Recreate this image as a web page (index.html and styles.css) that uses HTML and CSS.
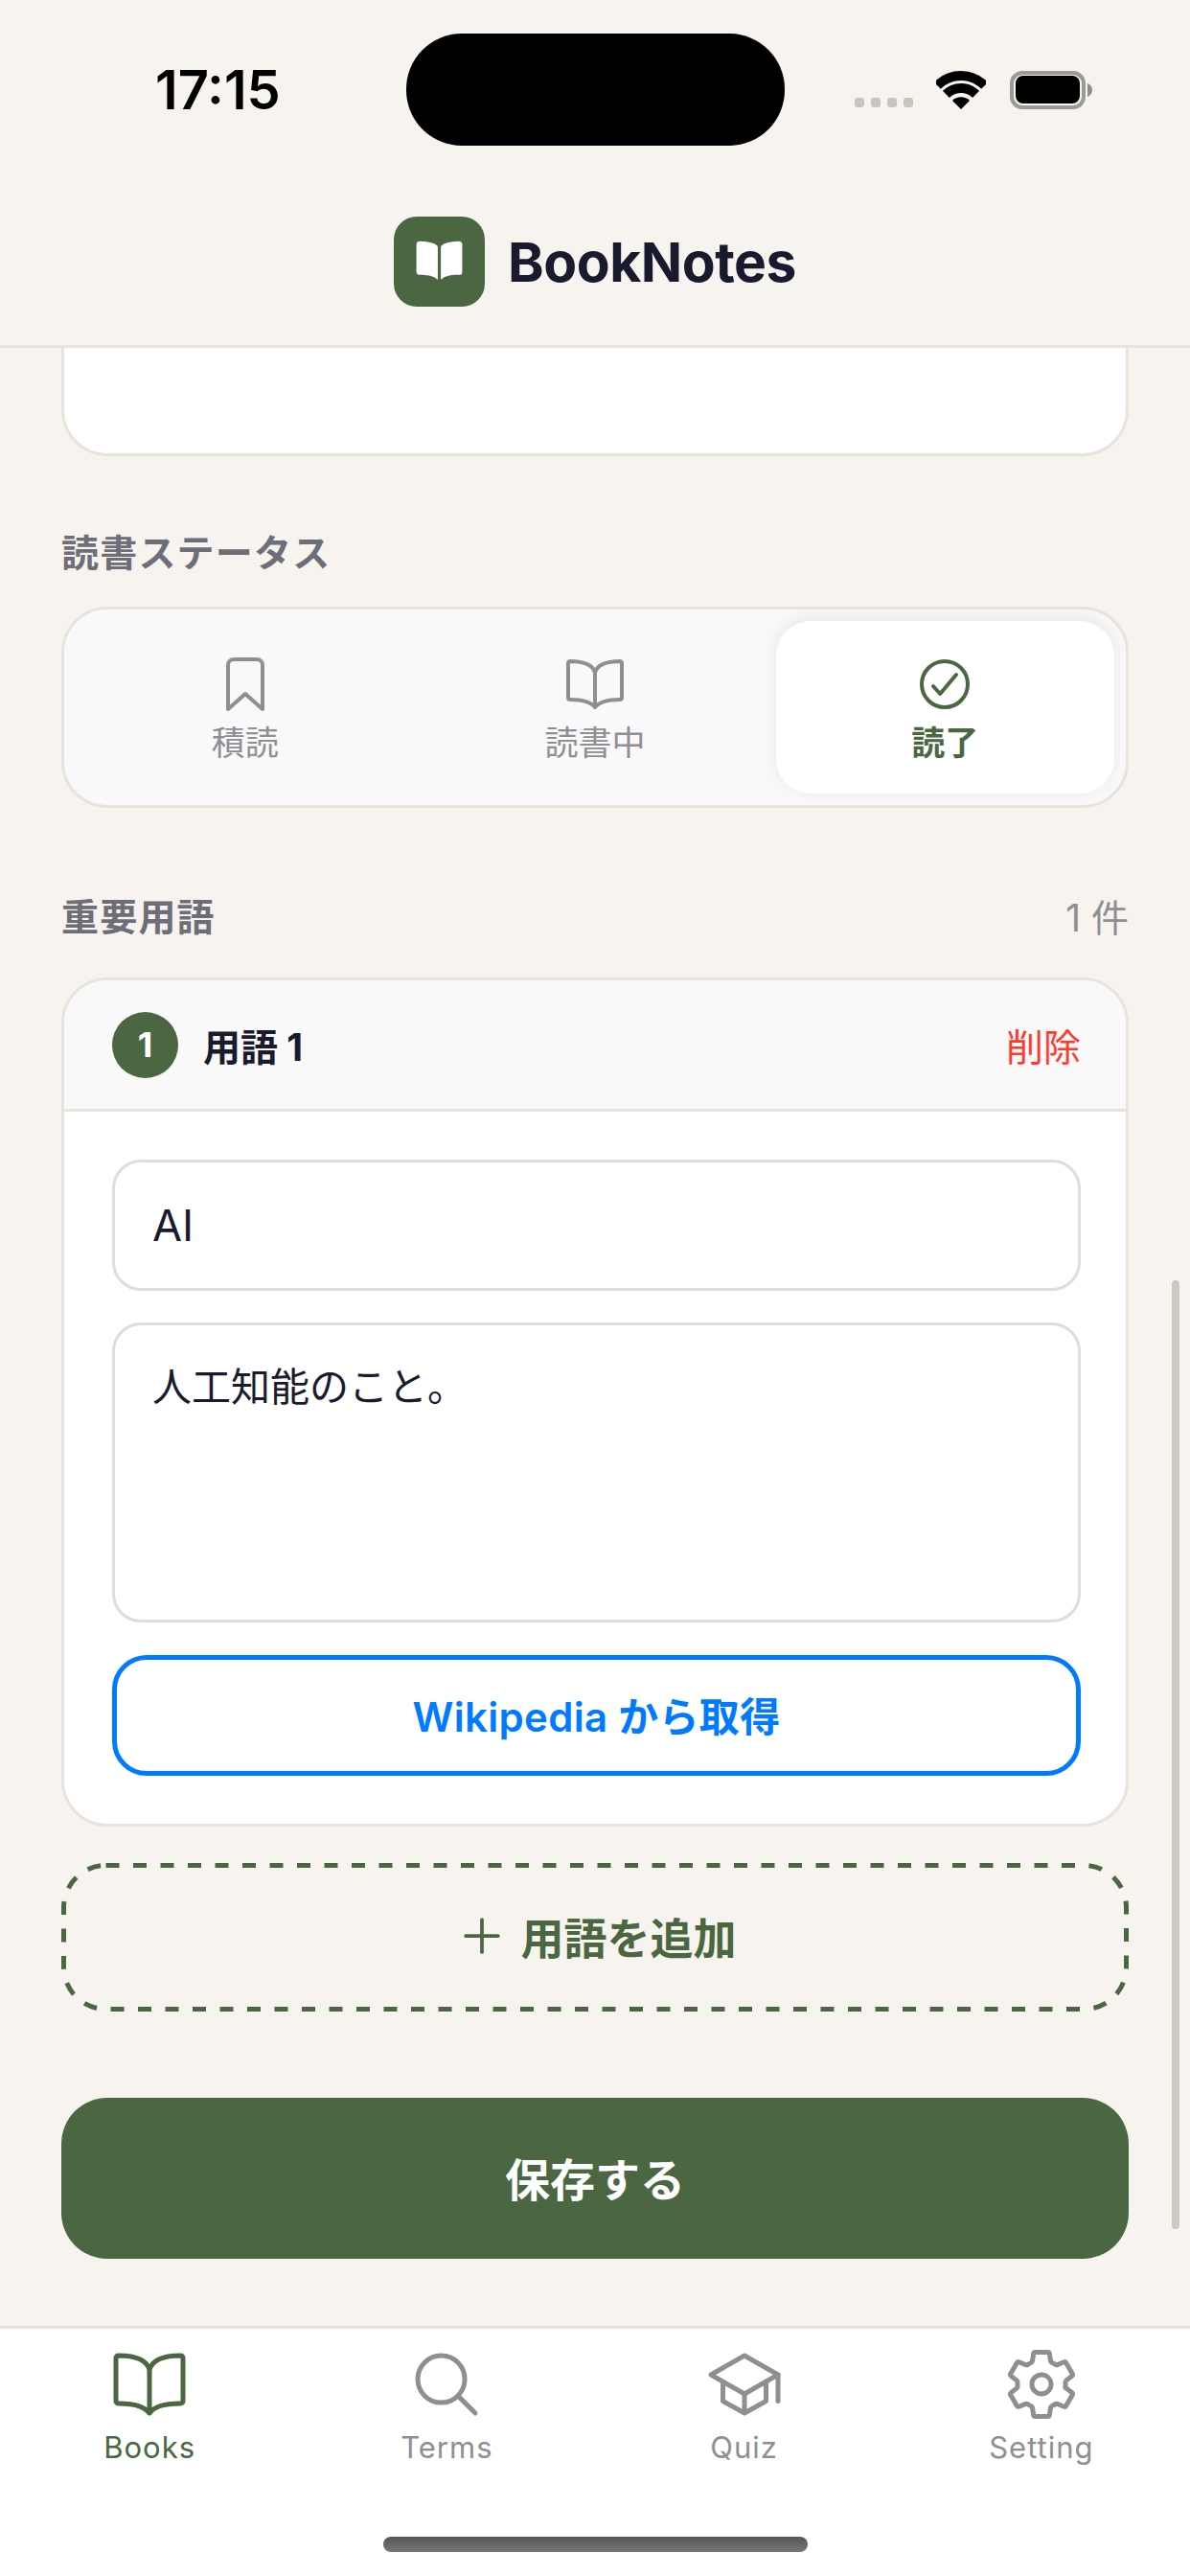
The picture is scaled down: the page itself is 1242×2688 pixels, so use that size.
FILE: index.html
```html
<!DOCTYPE html>
<html lang="ja">
<head>
    <meta charset="UTF-8">
    <meta name="viewport" content="width=device-width, initial-scale=1.0">
    <title>BookNotes</title>
    <link rel="stylesheet" href="styles.css">
</head>
<body>

    <!-- Status bar -->
    <div class="status-bar">
        <div class="status-time">17:15</div>
        <div class="island"></div>
        <div class="status-icons">
            <div class="signal-dots"><span></span><span></span><span></span><span></span></div>
            <svg class="wifi" viewBox="0 0 52 40">
                <path class="wifi-arc" d="M1.3 15.3A35 35 0 0 1 50.7 15.3"/>
                <path class="wifi-arc" d="M10.4 24.4A22 22 0 0 1 41.6 24.4"/>
                <path d="M26 40L17 31A12.7 12.7 0 0 1 35 31Z"/>
            </svg>
            <svg class="battery" viewBox="0 0 86 40">
                <rect class="battery-shell" x="2" y="2" width="75" height="36" rx="11"/>
                <rect x="6" y="5" width="67" height="29" rx="8"/>
                <path class="battery-cap" d="M81 13c3 1 5 4 5 7s-2 6-5 7z"/>
            </svg>
        </div>
    </div>

    <!-- App header -->
    <header class="app-header">
        <div class="logo">
            <svg viewBox="0 0 512 512"><path d="M202.24 74C166.11 56.75 115.61 48.3 48 48a31.36 31.36 0 00-17.92 5.33A32 32 0 0016 79.9V366c0 19.34 13.76 33.93 32 33.93 71.07 0 142.36 6.64 185.06 47a4.11 4.11 0 006.94-3V106.82a15.89 15.89 0 00-5.46-12A143 143 0 00202.24 74zM481.92 53.3A31.33 31.33 0 00464 48c-67.61.3-118.11 8.71-154.24 26a143.31 143.31 0 00-32.31 20.78 15.93 15.93 0 00-5.45 12v337.13a3.93 3.93 0 006.68 2.81c25.67-25.5 70.72-46.82 185.36-46.81a32 32 0 0032-32v-288a32 32 0 00-14.12-26.61z"/></svg>
        </div>
        <div class="app-name">BookNotes</div>
    </header>

    <main class="content">
        <div class="scroll-thumb"></div>

        <div class="card-tail"></div>

        <section class="status-section">
            <div class="section-label status-label">読書ステータス</div>
            <div class="segments">
                <div class="segment">
                    <svg class="line-icon seg-icon" viewBox="0 0 512 512"><path d="M352 48H160a48 48 0 00-48 48v368l144-128 144 128V96a48 48 0 00-48-48z"/></svg>
                    <span>積読</span>
                </div>
                <div class="segment">
                    <svg class="line-icon seg-icon" viewBox="0 0 512 512"><path d="M256 160c16-63.16 76.43-95.41 208-96a15.94 15.94 0 0116 16v288a16 16 0 01-16 16c-128 0-177.45 25.81-208 64-30.37-38-80-64-208-64-9.88 0-16-8.05-16-17.93V80a15.94 15.94 0 0116-16c131.57.59 192 32.84 208 96zM256 160v288"/></svg>
                    <span>読書中</span>
                </div>
                <div class="segment active">
                    <svg class="line-icon seg-icon" viewBox="0 0 512 512"><path d="M448 256c0-106-86-192-192-192S64 150 64 256s86 192 192 192 192-86 192-192z"/><path d="M352 176L217.6 336 160 272"/></svg>
                    <span>読了</span>
                </div>
            </div>
        </section>

        <section class="terms-section">
            <div class="terms-row">
                <div class="section-label">重要用語</div>
                <div class="terms-count">1 件</div>
            </div>

            <div class="term-card">
                <div class="term-head">
                    <div class="term-badge">1</div>
                    <div class="term-title">用語 1</div>
                    <div class="term-delete">削除</div>
                </div>
                <div class="term-body">
                    <div class="field field-name">AI</div>
                    <div class="field field-desc">人工知能のこと。</div>
                    <div class="wiki-btn">Wikipedia から取得</div>
                </div>
            </div>

            <div class="add-term">
                <svg class="add-border" viewBox="0 0 1114 155"><rect x="2.5" y="2.5" width="1109" height="150" rx="44"/></svg>
                <svg class="line-icon add-plus" viewBox="0 0 512 512"><path d="M256 112v288M400 256H112"/></svg>
                <span>用語を追加</span>
            </div>
        </section>

        <div class="save-btn">保存する</div>
    </main>

    <!-- Bottom tabs -->
    <nav class="tab-bar">
        <div class="tabs">
            <div class="tab active">
                <svg class="line-icon tab-icon" viewBox="0 0 512 512"><path d="M256 160c16-63.16 76.43-95.41 208-96a15.94 15.94 0 0116 16v288a16 16 0 01-16 16c-128 0-177.45 25.81-208 64-30.37-38-80-64-208-64-9.88 0-16-8.05-16-17.93V80a15.94 15.94 0 0116-16c131.57.59 192 32.84 208 96zM256 160v288"/></svg>
                <span>Books</span>
            </div>
            <div class="tab">
                <svg class="line-icon tab-icon" viewBox="0 0 512 512"><path d="M221.09 64a157.09 157.09 0 10157.09 157.09A157.1 157.1 0 00221.09 64z"/><path d="M338.29 338.29L448 448"/></svg>
                <span>Terms</span>
            </div>
            <div class="tab">
                <svg class="line-icon tab-icon" viewBox="0 0 512 512"><path d="M32 192L256 64l224 128-224 128L32 192z"/><path d="M112 240v128l144 80 144-80V240M480 368V192M256 320v128"/></svg>
                <span>Quiz</span>
            </div>
            <div class="tab">
                <svg class="line-icon tab-icon" viewBox="0 0 512 512"><path d="M262.29 192.31a64 64 0 1057.4 57.4 64.13 64.13 0 00-57.4-57.4zM416.39 256a154.34 154.34 0 01-1.53 20.79l45.21 35.46a10.81 10.81 0 012.45 13.75l-42.77 74a10.81 10.81 0 01-13.14 4.59l-44.9-18.08a16.11 16.11 0 00-15.17 1.75A164.48 164.48 0 01325 400.8a15.94 15.94 0 00-8.82 12.14l-6.73 47.89a11.08 11.08 0 01-10.68 9.17h-85.54a11.11 11.11 0 01-10.69-8.87l-6.72-47.82a16.07 16.07 0 00-9-12.22 155.3 155.3 0 01-21.46-12.57 16 16 0 00-15.11-1.71l-44.89 18.07a10.81 10.81 0 01-13.14-4.58l-42.77-74a10.8 10.8 0 012.45-13.75l38.21-30a16.05 16.05 0 006-14.08c-.36-4.17-.58-8.33-.58-12.5s.21-8.27.58-12.35a16 16 0 00-6.07-13.94l-38.19-30A10.81 10.81 0 0149.48 186l42.77-74a10.81 10.81 0 0113.14-4.59l44.9 18.08a16.11 16.11 0 0015.17-1.75A164.48 164.48 0 01187 111.2a15.94 15.94 0 008.82-12.14l6.73-47.89A11.08 11.08 0 01213.23 42h85.54a11.11 11.11 0 0110.69 8.87l6.72 47.82a16.07 16.07 0 009 12.22 155.3 155.3 0 0121.46 12.57 16 16 0 0015.11 1.71l44.89-18.07a10.81 10.81 0 0113.14 4.58l42.77 74a10.8 10.8 0 01-2.45 13.75l-38.21 30a16.05 16.05 0 00-6.05 14.08c.33 4.14.55 8.3.55 12.47z"/></svg>
                <span>Setting</span>
            </div>
        </div>
        <div class="home-indicator"></div>
    </nav>

</body>
</html>
```

FILE: styles.css
```css
* {
    box-sizing: border-box;
}
body {
    margin: 0;
    width: 1242px;
    height: 2688px;
    display: flex;
    flex-direction: column;
    overflow: hidden;
    font-family: Inter, "Noto Sans CJK JP", sans-serif;
    background-color: #f7f4ef;
    color: #1a1a2e;
}

/* status bar */
.status-bar {
    display: grid;
    grid-template-columns: 1fr 395px 1fr;
    align-items: center;
    height: 117px;
    margin-top: 35px;
}
.status-time {
    padding-left: 162px;
    font-size: 56px;
    font-weight: 600;
    color: #000;
}
.island {
    height: 117px;
    border-radius: 58px;
    background-color: #000;
}
.status-icons {
    display: flex;
    align-items: center;
    padding-left: 73px;
}
.signal-dots {
    display: flex;
    gap: 7px;
    margin-top: 26px;
}
.signal-dots span {
    width: 10px;
    height: 10px;
    border-radius: 3px;
    background-color: #c8c5bf;
}
.wifi {
    width: 52px;
    height: 40px;
    margin-left: 24px;
}
.wifi-arc {
    fill: none;
    stroke: #000;
    stroke-width: 10;
}
.battery {
    width: 86px;
    height: 40px;
    margin-left: 25px;
}
.battery-shell {
    fill: none;
    stroke: #9c9a96;
    stroke-width: 4;
}
.battery-cap {
    fill: #8f8e8a;
}

/* app header */
.app-header {
    display: flex;
    align-items: center;
    justify-content: center;
    gap: 24px;
    padding: 74px 0 40px;
    border-bottom: 3px solid #e8e3dc;
}
.logo {
    display: flex;
    align-items: center;
    justify-content: center;
    width: 95px;
    height: 94px;
    border-radius: 24px;
    background-color: #4a6741;
}
.logo svg {
    width: 51px;
    height: 51px;
    margin-top: -2px;
    fill: #fff;
}
.app-name {
    font-size: 57px;
    font-weight: 700;
    letter-spacing: -0.5px;
}

/* shared line icons */
.line-icon {
    fill: none;
    stroke: currentColor;
    stroke-width: 32;
    stroke-linecap: round;
    stroke-linejoin: round;
}

/* scrolling area */
.content {
    position: relative;
    flex: 1;
    padding: 0 64px;
    overflow: hidden;
}
.scroll-thumb {
    position: absolute;
    top: 973px;
    right: 11px;
    width: 8px;
    height: 990px;
    border-radius: 4px;
    background-color: #cdc9c2;
}
.card-tail {
    height: 113px;
    border: 3px solid #e8e3dc;
    border-top: none;
    border-radius: 0 0 48px 48px;
    background-color: #fff;
}
.section-label {
    height: 54px;
    font-size: 39px;
    font-weight: 700;
    line-height: 52px;
    letter-spacing: 1.2px;
    color: #6e6e78;
}

/* reading status */
.status-section {
    margin-top: 75px;
}
.status-label {
    margin-bottom: 28px;
}
.segments {
    display: flex;
    gap: 12px;
    padding: 12px;
    height: 210px;
    overflow: hidden;
    border: 3px solid #e8e3dc;
    border-radius: 48px;
    background-color: #f9f9f9;
}
.segment {
    flex: 1;
    display: flex;
    flex-direction: column;
    align-items: center;
    justify-content: center;
    gap: 5px;
    padding-top: 5px;
    border-radius: 36px;
    font-size: 35px;
    line-height: 48px;
    color: #8e8e93;
}
.segment.active {
    background-color: #fff;
    color: #4a6741;
    font-weight: 700;
    box-shadow: 0 -3px 18px rgba(0, 0, 0, 0.08);
}
.seg-icon {
    width: 64px;
    height: 64px;
}

/* terms */
.terms-section {
    margin-top: 88px;
}
.terms-row {
    display: flex;
    justify-content: space-between;
    align-items: center;
    height: 54px;
    margin-bottom: 35px;
}
.terms-count {
    font-size: 39px;
    line-height: 54px;
    color: #8e8e93;
}
.term-card {
    border: 3px solid #e8e3dc;
    border-radius: 48px;
    overflow: hidden;
    background-color: #fff;
}
.term-head {
    display: flex;
    align-items: center;
    height: 137px;
    padding: 0 47px 0 50px;
    border-bottom: 3px solid #e8e3dc;
    background-color: #f9f9f9;
}
.term-badge {
    display: flex;
    align-items: center;
    justify-content: center;
    width: 69px;
    height: 69px;
    border-radius: 50%;
    background-color: #4a6741;
    color: #fff;
    font-size: 36px;
    font-weight: 700;
}
.term-title {
    flex: 1;
    margin-left: 26px;
    font-size: 39px;
    font-weight: 700;
}
.term-delete {
    font-size: 39px;
    color: #ff3b30;
}
.term-body {
    display: flex;
    flex-direction: column;
    gap: 33px;
    padding: 50px 47px 50px 50px;
}
.field {
    border: 3px solid #ddd;
    border-radius: 30px;
    padding: 0 39px;
}
.field-name {
    display: flex;
    align-items: center;
    height: 137px;
    font-size: 45px;
}
.field-desc {
    height: 313px;
    margin-bottom: 1px;
    padding-top: 34px;
    font-size: 41px;
    line-height: 60px;
}
.wiki-btn {
    display: flex;
    align-items: center;
    justify-content: center;
    height: 126px;
    padding-bottom: 3px;
    border: 5px solid #007aff;
    border-radius: 36px;
    color: #007aff;
    font-size: 42px;
    font-weight: 600;
    letter-spacing: 0.3px;
}
.add-term {
    position: relative;
    display: flex;
    align-items: center;
    justify-content: center;
    gap: 10px;
    height: 155px;
    margin-top: 38px;
    padding-bottom: 3px;
    color: #4a6741;
    font-size: 45px;
    font-weight: 700;
}
.add-border {
    position: absolute;
    inset: 0;
    width: 100%;
    height: 100%;
    fill: none;
    stroke: #4a6741;
    stroke-width: 5;
    stroke-dasharray: 14 14.5;
}
.add-plus {
    width: 60px;
    height: 60px;
}
.save-btn {
    display: flex;
    align-items: center;
    justify-content: center;
    height: 168px;
    margin-top: 90px;
    padding-bottom: 4px;
    border-radius: 48px;
    background-color: #4a6741;
    color: #fff;
    font-size: 47px;
    font-weight: 700;
}

/* bottom tabs */
.tab-bar {
    height: 261px;
    border-top: 3px solid #e8e3dc;
    background-color: #fff;
}
.tabs {
    display: flex;
    padding: 18px 0 0 1px;
}
.tab {
    flex: 1;
    display: flex;
    flex-direction: column;
    align-items: center;
    font-size: 31px;
    font-weight: 400;
    line-height: 44px;
    letter-spacing: 1px;
    color: #8e8e93;
}
.tab.active {
    color: #4a6741;
}
.tab-icon {
    width: 80px;
    height: 80px;
    margin-bottom: 4px;
}
.home-indicator {
    width: 443px;
    height: 16px;
    margin: 71px auto 0;
    border-radius: 8px;
    background: linear-gradient(#555, #777);
}
```
